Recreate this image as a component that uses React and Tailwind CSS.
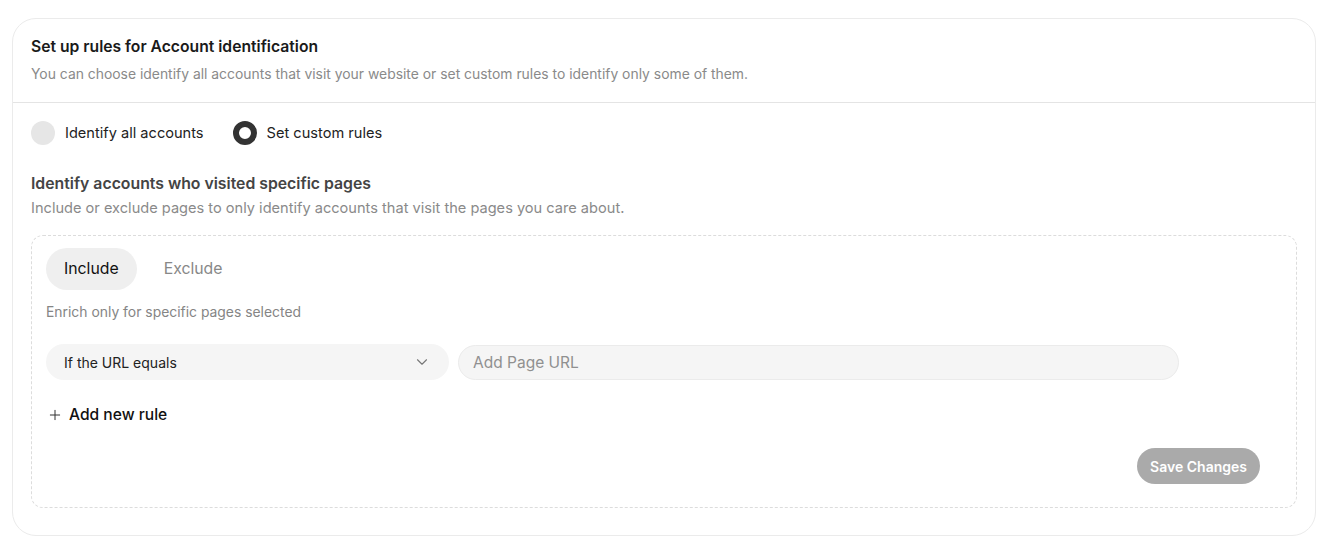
import { ChevronDown, Plus } from 'lucide-react';
import { useState } from 'react';

const App = () => {
  const [mode, setMode] = useState('custom');
  const [tab, setTab] = useState('include');

  return (
    <div className="min-h-screen bg-white px-3 pt-[18px]" style={{ fontFamily: 'Inter, "Noto Sans", sans-serif' }}>
      <div className="w-[1304px] rounded-[24px] border border-[#ebebeb] bg-white pb-[27px]">
        <div className="border-b border-[#e4e4e4] px-[18px] pt-[18px] pb-[18px]">
          <h2 className="text-[15.7px] font-semibold leading-[20px] text-[#1a1a1a]">Set up rules for Account identification</h2>
          <p className="mt-[7px] text-[13.9px] leading-[20px] text-[#8a8a8a]">
            You can choose identify all accounts that visit your website or set custom rules to identify only some of them.
          </p>
        </div>

        <div className="px-[18px]">
          <div className="flex items-center gap-[29px] pt-[18px]">
            <button onClick={() => setMode('all')} className="flex items-center gap-[10px]">
              <span className={`h-6 w-6 rounded-full ${mode === 'all' ? 'border-[6px] border-[#333] bg-white' : 'bg-[#e6e6e6]'}`} />
              <span className="text-[14.6px] leading-[24px] text-[#222]">Identify all accounts</span>
            </button>
            <button onClick={() => setMode('custom')} className="flex items-center gap-[10px]">
              <span className={`h-6 w-6 rounded-full ${mode === 'custom' ? 'border-[6px] border-[#333] bg-white' : 'bg-[#e6e6e6]'}`} />
              <span className="text-[14.6px] leading-[24px] text-[#222]">Set custom rules</span>
            </button>
          </div>

          <h3 className="mt-[28px] text-[15.8px] font-semibold leading-[22px] text-[#444]">Identify accounts who visited specific pages</h3>
          <p className="mt-[3px] text-[14.6px] leading-[20px] text-[#8a8a8a]">
            Include or exclude pages to only identify accounts that visit the pages you care about.
          </p>

          <div className="mt-[17px] w-[1266px] rounded-[12px] border border-dashed border-[#dcdcdc] px-[14px] pt-[12px] pb-[23px]">
            <div className="flex items-center gap-[7px]">
              <button
                onClick={() => setTab('include')}
                className={`h-[42px] rounded-full px-[18px] text-[15.8px] ${tab === 'include' ? 'bg-[#efefef] text-[#111]' : 'text-[#888]'}`}
              >
                Include
              </button>
              <button
                onClick={() => setTab('exclude')}
                className={`h-[42px] rounded-full px-[20px] text-[15.8px] ${tab === 'exclude' ? 'bg-[#efefef] text-[#111]' : 'text-[#888]'}`}
              >
                Exclude
              </button>
            </div>

            <p className="mt-[13px] text-[13.9px] leading-[18px] text-[#858585]">Enrich only for specific pages selected</p>

            <div className="mt-[23px] flex items-center gap-[9px]">
              <div className="flex h-[36px] w-[403px] items-center justify-between rounded-full bg-[#f5f5f5] pl-[18px] pr-[18px]">
                <span className="text-[14px] text-[#222]">If the URL equals</span>
                <ChevronDown className="h-[18px] w-[18px] text-[#777]" strokeWidth={1.5} />
              </div>
              <input
                placeholder="Add Page URL"
                className="h-[35px] w-[721px] rounded-full border border-[#ebebeb] bg-[#f5f5f5] px-[14px] text-[15.5px] text-[#222] outline-none placeholder:text-[#909090]"
              />
            </div>

            <button className="mt-[23px] flex h-[24px] items-center gap-[6px] pl-[1px] text-[15.6px] font-medium leading-[24px] text-[#111]">
              <Plus className="h-[16px] w-[16px] text-[#333]" strokeWidth={1.5} />
              Add new rule
            </button>

            <div className="mt-[21px] flex justify-end pr-[22px]">
              <button className="h-[36px] rounded-full bg-[#aaaaaa] px-[13px] text-[14px] font-semibold text-white">Save Changes</button>
            </div>
          </div>
        </div>
      </div>
    </div>
  );
};

export default App;
